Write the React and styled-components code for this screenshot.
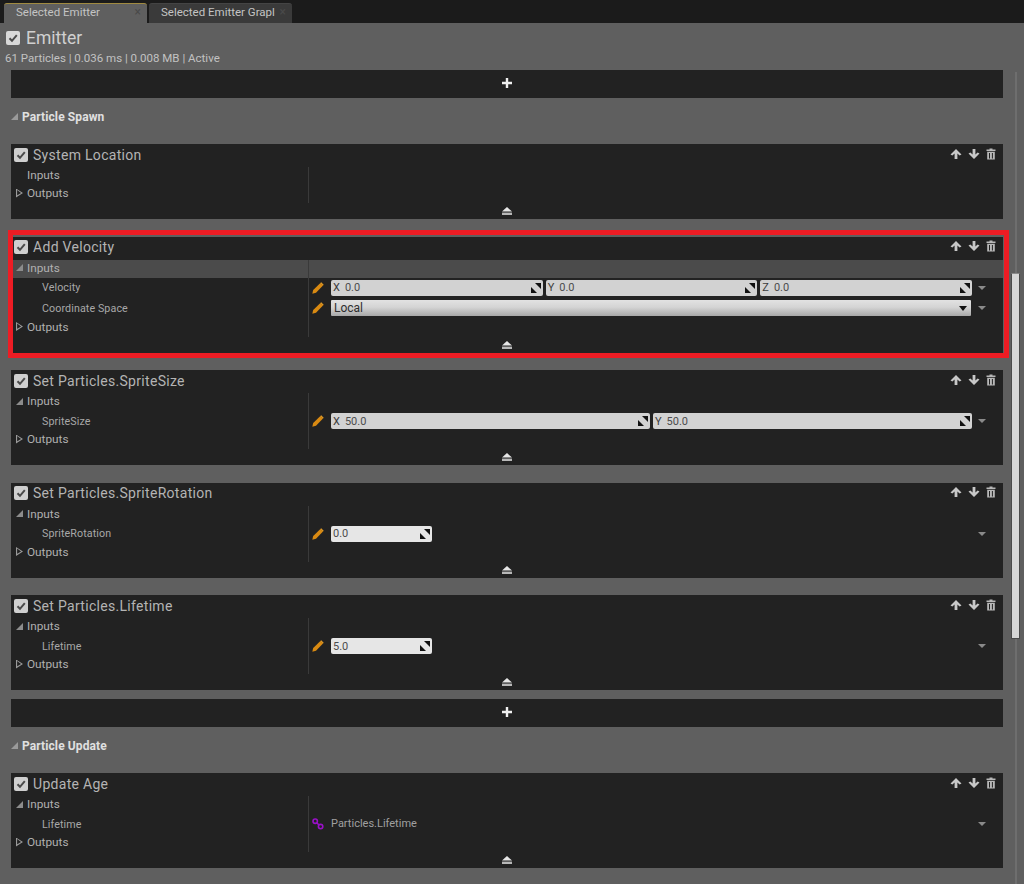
import React from 'react'
import styled, { createGlobalStyle } from 'styled-components'

const GlobalStyle = createGlobalStyle`
    html, body {
        margin: 0;
        background: #5f5f5f;
    }
    body {
        width: 1024px;
        height: 884px;
        overflow: hidden;
        font-family: Roboto, "Liberation Sans", sans-serif;
    }
`

const modules = [
    { title: 'System Location', rows: [] },
    {
        title: 'Add Velocity',
        open: true,
        highlight: true,
        rows: [
            { name: 'Velocity', fields: [['X', '0.0'], ['Y', '0.0'], ['Z', '0.0']], edit: true, rowHeight: 20 },
            { name: 'Coordinate Space', select: 'Local', edit: true, rowHeight: 21 },
        ],
    },
    { title: 'Set Particles.SpriteSize', open: true, rows: [{ name: 'SpriteSize', fields: [['X', '50.0'], ['Y', '50.0']], edit: true }] },
    { title: 'Set Particles.SpriteRotation', open: true, rows: [{ name: 'SpriteRotation', single: '0.0', edit: true }] },
    { title: 'Set Particles.Lifetime', open: true, rows: [{ name: 'Lifetime', single: '5.0', edit: true }] },
]

const CheckIcon = () => (
    <svg width="10" height="10" viewBox="0 0 10 10">
        <path d="M1.5 5.2 L4 7.8 L8.8 2.2" fill="none" stroke="#4a4a4a" strokeWidth="2" />
    </svg>
)

const ArrowUp = () => (
    <svg width="12" height="12" viewBox="0 0 12 12">
        <path d="M6 1 L11.5 6.5 L9.6 7.6 L7.4 5.6 L7.4 11 L4.6 11 L4.6 5.6 L2.4 7.6 L0.5 6.5 Z" fill="#c8c8c8" />
    </svg>
)

const ArrowDown = () => (
    <svg width="12" height="12" viewBox="0 0 12 12">
        <path d="M6 11 L11.5 5.5 L9.6 4.4 L7.4 6.4 L7.4 1 L4.6 1 L4.6 6.4 L2.4 4.4 L0.5 5.5 Z" fill="#c8c8c8" />
    </svg>
)

const TrashIcon = () => (
    <svg width="10" height="12" viewBox="0 0 10 12">
        <path d="M3.5 0.5 H6.5 V1.5 H9.5 V3 H0.5 V1.5 H3.5 Z" fill="#b8b8b8" />
        <path d="M1.2 3.8 H8.8 V11.5 H1.2 Z M3 5 V10.4 H4 V5 Z M5.9 5 V10.4 H6.9 V5 Z" fill="#b8b8b8" fillRule="evenodd" />
    </svg>
)

const PencilIcon = () => (
    <svg width="12" height="12" viewBox="0 0 12 12">
        <path d="M0.3 11.7 L1.2 8 L8.4 1 L11 3.6 L4 10.8 Z" fill="#d98a12" />
        <path d="M8.4 1 L9.2 0.3 L11.7 2.8 L11 3.6 Z" fill="#efa52a" />
    </svg>
)

const LinkIcon = () => (
    <svg width="12" height="12" viewBox="0 0 12 12">
        <circle cx="3.2" cy="3.2" r="2.2" fill="none" stroke="#9a10c8" strokeWidth="1.6" />
        <circle cx="8.6" cy="8.6" r="2.2" fill="none" stroke="#9a10c8" strokeWidth="1.6" />
        <path d="M4.8 4.8 L7 7" stroke="#9a10c8" strokeWidth="1.6" />
    </svg>
)

const ResizeIcon = () => (
    <svg width="10" height="10" viewBox="0 0 10 10">
        <path d="M4 0 H10 V6 Z" fill="#111" />
        <path d="M6 10 H0 V4 Z" fill="#111" />
    </svg>
)

const CollapseIcon = () => (
    <svg width="10" height="8" viewBox="0 0 10 8">
        <path d="M5 0 L10 4.6 H0 Z" fill="#e6e6e6" />
        <rect x="0" y="5.6" width="10" height="2.4" fill="#b8b8b8" />
    </svg>
)

const PlusIcon = () => (
    <svg width="10" height="10" viewBox="0 0 10 10">
        <path d="M3.8 0 H6.2 V3.8 H10 V6.2 H6.2 V10 H3.8 V6.2 H0 V3.8 H3.8 Z" fill="#f0f0f0" />
    </svg>
)

function Field({ label, value }) {
    return (
        <NumberField>
            {label && <Axis>{label}</Axis>}
            <span>{value}</span>
            <ResizeCorner><ResizeIcon /></ResizeCorner>
        </NumberField>
    )
}

function ParamRow({ row }) {
    return (
        <Row $height={row.rowHeight}>
            <RowName>{row.name}</RowName>
            <RowValue>
                <EditSlot>{row.link ? <LinkIcon /> : <PencilIcon />}</EditSlot>
                {row.fields && (
                    <FieldGroup>
                        {row.fields.map(([label, value]) => <Field key={label} label={label} value={value} />)}
                    </FieldGroup>
                )}
                {row.select && (
                    <SelectBox>
                        {row.select}
                        <SelectCaret />
                    </SelectBox>
                )}
                {row.single && (
                    <SingleWrap><FieldBright><span>{row.single}</span><ResizeCorner><ResizeIcon /></ResizeCorner></FieldBright></SingleWrap>
                )}
                {row.link && <LinkText>{row.link}</LinkText>}
                <RowCaret />
            </RowValue>
        </Row>
    )
}

function ModuleCard({ title, open, rows, highlight }) {
    return (
        <Card>
            {highlight && <Highlight />}
            <CardHeader>
                <CheckBox $size={14}><CheckIcon /></CheckBox>
                <CardTitle>{title}</CardTitle>
                <Actions>
                    <ArrowUp />
                    <ArrowDown />
                    <TrashIcon />
                </Actions>
            </CardHeader>
            <Section $active={highlight}>
                {open ? <TriangleOpen /> : <TriangleSpacer />}
                <SectionLabel>Inputs</SectionLabel>
            </Section>
            {rows.map(row => <ParamRow key={row.name} row={row} />)}
            <Section>
                <TriangleClosed />
                <SectionLabel>Outputs</SectionLabel>
            </Section>
            <CardFooter><CollapseIcon /></CardFooter>
        </Card>
    )
}

export default function App() {
    return (
        <Page>
            <GlobalStyle />
            <TabBar>
                <Tab $active>
                    <TabLabel>Selected Emitter</TabLabel>
                    <TabClose>×</TabClose>
                </Tab>
                <Tab>
                    <TabLabel>Selected Emitter Grapl</TabLabel>
                    <TabClose>×</TabClose>
                </Tab>
            </TabBar>
            <Panel>
                <EmitterHead>
                    <CheckBox $size={14} $dim><CheckIcon /></CheckBox>
                    <EmitterTitle>Emitter</EmitterTitle>
                </EmitterHead>
                <Stats>61 Particles | 0.036 ms | 0.008 MB | Active</Stats>
                <PlusBar><PlusIcon /></PlusBar>
                <Group><GroupTriangle /><GroupTitle>Particle Spawn</GroupTitle></Group>
                <Cards>
                    {modules.map(m => <ModuleCard key={m.title} {...m} />)}
                </Cards>
                <AddBarLower><PlusIcon /></AddBarLower>
                <Group><GroupTriangle /><GroupTitle>Particle Update</GroupTitle></Group>
                <ModuleCard
                    title="Update Age"
                    open
                    rows={[{ name: 'Lifetime', link: 'Particles.Lifetime' }]}
                />
                <ScrollTrack />
                <Scrollbar />
            </Panel>
        </Page>
    )
}

const Page = styled.div`
    width: 1024px;
    height: 884px;
    display: flex;
    flex-direction: column;
    background: #5f5f5f;
    overflow: hidden;
`

const TabBar = styled.div`
    height: 23px;
    flex: none;
    display: flex;
    align-items: flex-end;
    gap: 2px;
    padding-left: 4px;
    background: #1b1b1b;
`

const Tab = styled.div`
    height: 20px;
    width: 143px;
    box-sizing: border-box;
    display: flex;
    align-items: center;
    justify-content: space-between;
    padding: 0 6px 3px 12px;
    border-radius: 3px 3px 0 0;
    background: ${props => (props.$active ? '#5f5f5f' : '#3a3a3a')};
    border-top: 1px solid ${props => (props.$active ? '#a08a40' : '#444')};
`

const TabLabel = styled.span`
    font-size: 11.5px;
    color: #c4c4c4;
    white-space: nowrap;
    overflow: hidden;
`

const TabClose = styled.span`
    font-size: 12px;
    line-height: 12px;
    color: #4a4a4a;
`

const Panel = styled.div`
    position: relative;
    flex: 1;
    padding: 0 21px 0 11px;
    min-height: 0;
`

const EmitterHead = styled.div`
    height: 26px;
    padding-top: 2px;
    margin-left: -5px;
    display: flex;
    align-items: center;
    gap: 6px;
`

const EmitterTitle = styled.span`
    font-size: 17.5px;
    color: #d0d0d0;
`

const Stats = styled.div`
    height: 19px;
    margin-left: -6px;
    font-size: 11.5px;
    line-height: 15px;
    color: #c2c2c2;
`

const PlusBar = styled.div`
    height: 26px;
    padding-bottom: 2px;
    display: flex;
    align-items: center;
    justify-content: center;
    background: #222;
`

const AddBarLower = styled(PlusBar)`
    margin-top: 9px;
`

const Group = styled.div`
    height: 34px;
    padding-top: 12px;
    display: flex;
    align-items: flex-start;
`

const GroupTitle = styled.span`
    font-size: 12px;
    line-height: 14px;
    font-weight: 700;
    letter-spacing: 0.1px;
    color: #e0e0e0;
`

const Cards = styled.div`
    display: flex;
    flex-direction: column;
    gap: 17.5px;
`

const Card = styled.div`
    position: relative;
    background: #222;
`

const Highlight = styled.div`
    position: absolute;
    inset: -7px -6px -5px -3px;
    border: 5px solid #ed1c24;
    pointer-events: none;
`

const CardHeader = styled.div`
    height: 21px;
    padding: 0 7px 2px 3px;
    display: flex;
    align-items: center;
`

const CheckBox = styled.div`
    width: ${props => props.$size}px;
    height: ${props => props.$size}px;
    flex: none;
    display: flex;
    align-items: center;
    justify-content: center;
    border-radius: 2px;
    background: ${props => (props.$dim ? '#d8d8d8' : '#cfcfcf')};
`

const CardTitle = styled.span`
    margin-left: 5px;
    font-size: 14px;
    letter-spacing: 0.3px;
    color: #b4b4b4;
`

const Actions = styled.div`
    margin-left: auto;
    margin-bottom: 2px;
    display: flex;
    align-items: center;
    gap: 6px;
`

const Section = styled.div`
    height: 18px;
    width: 100%;
    display: flex;
    align-items: center;
    padding: 0 0 2px 5px;
    box-sizing: border-box;
    background: ${props => (props.$active ? '#4b4b4b' : 'transparent')};
    background-image: linear-gradient(#3a3a3a, #3a3a3a);
    background-size: 1px 100%;
    background-repeat: no-repeat;
    background-position: 297px 0;
`

const TriangleOpen = styled.span`
    width: 0;
    height: 0;
    flex: none;
    margin-right: 4px;
    border-left: 7px solid transparent;
    border-bottom: 7px solid #8c8c8c;
`

const GroupTriangle = styled(TriangleOpen)`
    margin-top: 3px;
    border-bottom-color: #9a9a9a;
`

const TriangleClosed = styled.span`
    width: 7px;
    height: 9px;
    flex: none;
    margin-right: 4px;
    box-sizing: border-box;
    background: #9a9a9a;
    clip-path: polygon(0 0, 100% 50%, 0 100%, 0 82%, 72% 50%, 16% 18%, 16% 82%, 0 82%);
`

const TriangleSpacer = styled.span`
    width: 7px;
    flex: none;
    margin-right: 4px;
`

const SectionLabel = styled.span`
    font-size: 11.8px;
    color: #b0b0b0;
`

const Row = styled.div`
    height: ${props => props.$height || 20}px;
    display: grid;
    grid-template-columns: 297px 1fr;
    align-items: stretch;
`

const RowName = styled.div`
    padding-left: 31px;
    display: flex;
    align-items: center;
    font-size: 10.7px;
    letter-spacing: 0.1px;
    color: #a8a8a8;
`

const RowValue = styled.div`
    display: flex;
    align-items: center;
    border-left: 1px solid #3a3a3a;
`

const EditSlot = styled.div`
    width: 19px;
    padding-left: 3px;
    flex: none;
    display: flex;
    align-items: center;
`

const FieldGroup = styled.div`
    width: 641px;
    display: flex;
    gap: 3px;
`

const NumberField = styled.div`
    flex: 1;
    height: 16px;
    box-sizing: border-box;
    display: flex;
    align-items: center;
    gap: 5px;
    padding-left: 2px;
    border-radius: 2px;
    background: #d2d2d2;
    font-size: 11px;
    color: #4c4c4c;
`

const FieldBright = styled(NumberField)`
    background: #e6e6e6;
`

const SingleWrap = styled.div`
    width: 641px;
    display: flex;

    ${FieldBright} {
        flex: none;
        width: 101px;
    }
`

const Axis = styled.span`
    font-size: 11px;
    color: #3c3c3c;
`

const ResizeCorner = styled.span`
    margin-left: auto;
    margin-right: 2px;
    width: 10px;
    height: 10px;
    display: flex;
`

const SelectBox = styled.div`
    width: 640px;
    height: 16px;
    margin-right: 1px;
    box-sizing: border-box;
    display: flex;
    align-items: center;
    justify-content: space-between;
    padding: 0 4px 0 3px;
    background: linear-gradient(#e2e2e2, #d4d4d4 45%, #a8a8a8);
    border-radius: 1px;
    font-size: 12px;
    color: #2e2e2e;
`

const SelectCaret = styled.span`
    width: 0;
    height: 0;
    border-left: 4px solid transparent;
    border-right: 4px solid transparent;
    border-top: 5px solid #111;
`

const RowCaret = styled.span`
    width: 0;
    height: 0;
    flex: none;
    margin-left: 6px;
    border-left: 4px solid transparent;
    border-right: 4px solid transparent;
    border-top: 4px solid #8a8a8a;
`

const LinkText = styled.span`
    width: 641px;
    padding-bottom: 2px;
    font-size: 11px;
    color: #a0a0a0;
`

const CardFooter = styled.div`
    height: 16px;
    display: flex;
    align-items: center;
    justify-content: center;
`

const ScrollTrack = styled.div`
    position: absolute;
    top: 49px;
    bottom: 0;
    right: 7px;
    width: 2px;
    background: #6e6e6e;
`

const Scrollbar = styled.div`
    position: absolute;
    top: 250px;
    right: 4px;
    width: 9px;
    height: 366px;
    background: #d6d6d6;
    border: 1px solid #4a4a4a;
    border-top-color: #8a8a8a;
    box-sizing: border-box;
    border-radius: 1px;
`
